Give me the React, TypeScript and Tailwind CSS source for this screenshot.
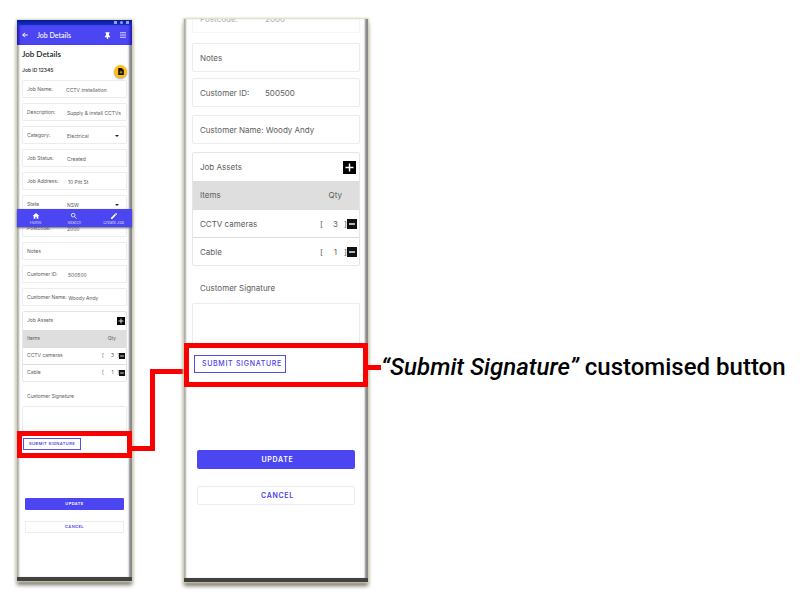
import React from "react";

type Size = "sm" | "lg";

const styles = {
  sm: {
    field: "h-[18px] pl-1 pr-[5px] pt-px rounded-[1px] text-[5px]",
    text: "text-[5px]",
    head: "h-[18px] pl-1 pr-px",
    cell: "h-[17px] pl-1",
    plus: "size-2",
    minus: "w-1.5 h-1.5",
    brackets: "w-[17px]",
    qty: "pr-[10px]",
    minusCell: "pr-px",
    label: "h-6 pl-[5px] pt-[5px] text-[5px]",
    pad: "h-[25px]",
    submitWrap: "h-[27px] pl-px pt-[2px]",
    submit: "w-[58px] h-3 text-[4px] font-semibold",
    actions: "mt-10 px-2 gap-[11px]",
    action: "h-3 text-[4px] font-semibold rounded-[1px]",
  },
  lg: {
    field: "h-[29px] pl-[7px] pr-1 rounded-[2px] text-[8px]",
    text: "text-[8px]",
    head: "h-[28px] pl-[7px] pr-[3px]",
    cell: "h-[28px] pl-[7px]",
    plus: "size-[13px]",
    minus: "w-[10px] h-[10px]",
    brackets: "w-[27px]",
    qty: "pr-[17px]",
    minusCell: "pr-[2px]",
    label: "h-[37px] pl-2 pt-[7px] text-[8px]",
    pad: "h-10",
    submitWrap: "h-11 pl-[5px] pt-[7px]",
    submit: "w-[92px] h-[18px] pl-1 pt-px text-[7px] font-medium",
    actions: "mt-[63px] px-[13px] gap-[17px]",
    action: "h-[19px] pl-[3px] pt-px text-[7px] font-semibold rounded-[2px]",
  },
};

function Field({
  size,
  label,
  value,
  labelWidth = "",
  options = false,
}: {
  size: Size;
  label: string;
  value?: string;
  labelWidth?: string;
  options?: boolean;
}) {
  const id = `${size}-${label.toLowerCase().replace(/[^a-z]/g, "")}`;
  return (
    <div className={`flex shrink-0 items-center border border-[#ececec] ${styles[size].field}`}>
      <label htmlFor={id} className={`shrink-0 whitespace-pre ${labelWidth}`}>
        {label}
      </label>
      {options ? (
        <>
          <select id={id} className="min-w-0 flex-1 appearance-none bg-transparent leading-[8px] outline-none">
            <option>{value}</option>
          </select>
          <svg viewBox="0 0 4 2" className="mr-0.5 h-0.5 w-1" fill="#222">
            <path d="M0 0h4L2 2z" />
          </svg>
        </>
      ) : (
        <input id={id} defaultValue={value} className="h-full min-w-0 flex-1 bg-transparent outline-none" />
      )}
    </div>
  );
}

function Assets({ size }: { size: Size }) {
  const s = styles[size];
  const rows: [string, number][] = [
    ["CCTV cameras", 3],
    ["Cable", 1],
  ];
  return (
    <div className="rounded-[2px] border border-[#e6e6e6]">
      <div className={`flex items-center justify-between ${s.head} ${s.text}`}>
        <span>Job Assets</span>
        <button aria-label="Add asset" className={`bg-black ${s.plus}`}>
          <svg viewBox="0 0 13 13" className="block size-full" stroke="#fff" strokeWidth="1.4">
            <path d="M6.5 2.5v8M2.5 6.5h8" />
          </svg>
        </button>
      </div>
      <table className={`w-full border-separate border-spacing-0 ${s.text}`}>
        <thead className="bg-[#dedede]">
          <tr>
            <th className={`py-0 text-left font-normal ${s.cell}`}>Items</th>
            <th className={`py-0 text-right font-normal ${s.qty}`}>Qty</th>
          </tr>
        </thead>
        <tbody>
          {rows.map(([name, qty]) => (
            <tr key={name}>
              <td className={`border-t border-[#dedede] py-0 ${s.cell}`}>{name}</td>
              <td className={`border-t border-[#dedede] py-0 ${s.minusCell}`}>
                <div className="flex items-center justify-end">
                  <span className={`flex justify-between ${s.brackets}`}>
                    <span>[</span>
                    <span className="pl-1">{qty}</span>
                    <span>]</span>
                  </span>
                  <button aria-label={`Remove ${name}`} className={`bg-[#111] ${s.minus}`}>
                    <svg viewBox="0 0 10 10" className="block size-full" stroke="#fff" strokeWidth="1.4">
                      <path d="M2 5h6" />
                    </svg>
                  </button>
                </div>
              </td>
            </tr>
          ))}
        </tbody>
      </table>
    </div>
  );
}

function Signature({ size }: { size: Size }) {
  const s = styles[size];
  return (
    <>
      <div className={size === "sm" ? "px-[5px]" : "px-2"}>
        <div className={`flex items-center ${s.label}`}>Customer Signature</div>
        <div className={`rounded-t-[2px] border border-b-0 border-[#ececec] ${s.pad}`} />
      </div>
      <div className={`border-5 border-[#fb0000] bg-white ${s.submitWrap}`}>
        <button
          className={`flex items-center justify-center whitespace-nowrap border border-[#5650e8] tracking-widest text-[#4840ee] ${s.submit}`}
        >
          SUBMIT SIGNATURE
        </button>
      </div>
      <div className={`flex flex-col ${s.actions}`}>
        <button className={`flex items-center justify-center bg-[#4c46f2] tracking-widest text-white ${s.action}`}>
          UPDATE
        </button>
        <button
          className={`flex items-center justify-center border border-[#ececec] tracking-widest text-[#4840ee] ${s.action}`}
        >
          CANCEL
        </button>
      </div>
    </>
  );
}

const frame =
  "relative flex shrink-0 flex-col border-b-4 border-[#424242] bg-white shadow-[inset_3px_0_2px_-1px_#aaa,inset_-4px_0_2px_-1px_#888,0_0_2px_1px_#dad7b4,0_4px_4px_0_#77756a]";

function FullPhone() {
  return (
    <section className={`mt-5 w-[115px] pb-[44px] ${frame}`}>
      <div className="flex h-[5px] items-center justify-end gap-[3px] bg-gradient-to-b from-[#0a1c8c] to-[#0c2fd0] pr-[3px]">
        <i className="size-[3px] bg-[#8fa2ee]" />
        <i className="size-[3px] rounded-full bg-[#8fa2ee]" />
        <i className="size-[3px] bg-[#8fa2ee]" />
      </div>
      <header className="flex h-5 items-center bg-[#4c46f2] pl-[5px] pr-[6px] text-white shadow-[inset_4px_0_3px_-2px_#2018b0,inset_-4px_0_3px_-2px_#2018b0]">
        <button aria-label="Back">
          <svg viewBox="0 0 24 24" className="block size-[6px]" fill="none" stroke="currentColor" strokeWidth="4">
            <path d="M23 12H3M12 3l-9 9 9 9" />
          </svg>
        </button>
        <span className="ml-[9px] font-['Lato'] text-[7px] font-medium">Job Details</span>
        <button aria-label="Pin" className="ml-auto">
          <svg viewBox="0 0 24 24" className="block size-[7px]" fill="currentColor">
            <path d="M5 1h14v3h-2v7l4 4v3h-7v6h-4v-6H3v-3l4-4V4H5z" />
          </svg>
        </button>
        <button aria-label="Menu" className="ml-[9px]">
          <svg viewBox="0 0 24 24" className="block size-[6px]" stroke="#d5d3ff" strokeWidth="4">
            <path d="M0 3h24M0 12h24M0 21h24" />
          </svg>
        </button>
      </header>
      <div className="px-[5px]">
        <h1 className="mt-[3px] font-['Lato'] text-[8px] font-semibold leading-[13px] text-[#222]">Job Details</h1>
        <div className="flex h-[19px] items-center justify-between text-[5px] font-medium text-[#222]">
          <span className="pt-px">Job ID 12345</span>
          <button
            aria-label="Add document"
            className="mt-px flex size-[13px] items-center justify-center rounded-full bg-[#fdc010] shadow-[0_1px_2px_#999]"
          >
            <svg viewBox="0 0 16 20" className="h-[7px] w-[6px]">
              <path d="M0 0h10l6 6v14H0z" fill="#111" />
              <path d="M8 8v8M4 12h8" stroke="#fdc010" strokeWidth="2" />
            </svg>
          </button>
        </div>
        <div className="flex flex-col gap-[5px]">
          <Field size="sm" label="Job Name:" value="CCTV installation" labelWidth="w-[39px]" />
          <Field size="sm" label="Description:" value="Supply & install CCTVs" labelWidth="w-10" />
          <Field size="sm" label="Category:" value="Electrical" labelWidth="w-10" options />
          <Field size="sm" label="Job Status:" value="Created" labelWidth="w-10" />
          <Field size="sm" label="Job Address:" value="10 Pitt St" labelWidth="w-[41px]" />
          <Field size="sm" label="State" value="NSW" labelWidth="w-10" options />
        </div>
        <div className="mt-1.5 flex flex-col gap-[5px]">
          <Field size="sm" label="Postcode:" value="2000" labelWidth="w-10" />
          <Field size="sm" label="Notes" />
          <Field size="sm" label="Customer ID:" value="500500" labelWidth="w-[41px]" />
          <Field size="sm" label="Customer Name: " value="Woody Andy" />
          <Assets size="sm" />
        </div>
      </div>
      <Signature size="sm" />
      <nav className="absolute inset-x-0 top-[189px] flex h-[18px] items-center justify-between bg-[#4c46f2] pl-[13px] pr-2 text-[4px] leading-[5px] text-[#d9d7ff] shadow-[0_1px_2px_#666]">
        <a href="#home" className="flex flex-col items-center">
          <svg viewBox="0 0 24 24" className="size-2" fill="#fff">
            <path d="M10 20v-6h4v6h5v-8h3L12 3 2 12h3v8z" />
          </svg>
          Home
        </a>
        <a href="#search" className="ml-1 flex flex-col items-center">
          <svg viewBox="0 0 24 24" className="size-2" fill="none" stroke="#fff" strokeWidth="2.4">
            <circle cx="9.5" cy="9.5" r="5.5" />
            <path d="M14 14l6 6" />
          </svg>
          Search
        </a>
        <a href="#create" className="flex flex-col items-center">
          <svg viewBox="0 0 24 24" className="size-2" fill="#fff">
            <path d="M3 17.2V21h3.8L17.8 9.9l-3.7-3.7zM20.7 7c.4-.4.4-1 0-1.400l-2.300-2.300a1 1 0 0 0-1.400 0l-1.800 1.800 3.700 3.700z" />
          </svg>
          Create Job
        </a>
      </nav>
    </section>
  );
}

function DetailPhone() {
  return (
    <section className={`mt-[19px] w-[184px] pb-[73px] ${frame}`}>
      <div className="px-2">
        <div className="flex h-[14px] flex-col justify-end overflow-hidden opacity-50">
          <Field size="lg" label="Postcode:" value="2000" labelWidth="w-[65px]" />
        </div>
        <div className="mt-[10px] flex flex-col gap-1.5">
          <Field size="lg" label="Notes" />
          <Field size="lg" label="Customer ID:" value="500500" labelWidth="w-[65px]" />
        </div>
        <div className="mt-2 flex flex-col gap-2">
          <Field size="lg" label="Customer Name: " value="Woody Andy" />
          <Assets size="lg" />
        </div>
      </div>
      <Signature size="lg" />
    </section>
  );
}

export default function App() {
  return (
    <main className="flex min-h-screen items-start overflow-hidden bg-white pl-[17px] font-['Inter',sans-serif] text-[#5c5c5c]">
      <FullPhone />
      <div aria-hidden="true" className="relative mt-[369px] flex w-[52px] shrink-0">
        <div className="h-[82px] w-[23px] border-r-5 border-b-5 border-[#fb0000]" />
        <div className="flex-1 border-t-5 border-[#fb0000]" />
      </div>
      <DetailPhone />
      <div className="relative mt-[353px] flex items-center whitespace-nowrap">
        <span className="h-[5px] w-[13px] bg-[#fb0000]" />
        <p className="font-['Roboto',sans-serif] text-[24px] font-medium leading-7 text-black">
          <em>“Submit Signature”</em> customised button
        </p>
      </div>
    </main>
  );
}
